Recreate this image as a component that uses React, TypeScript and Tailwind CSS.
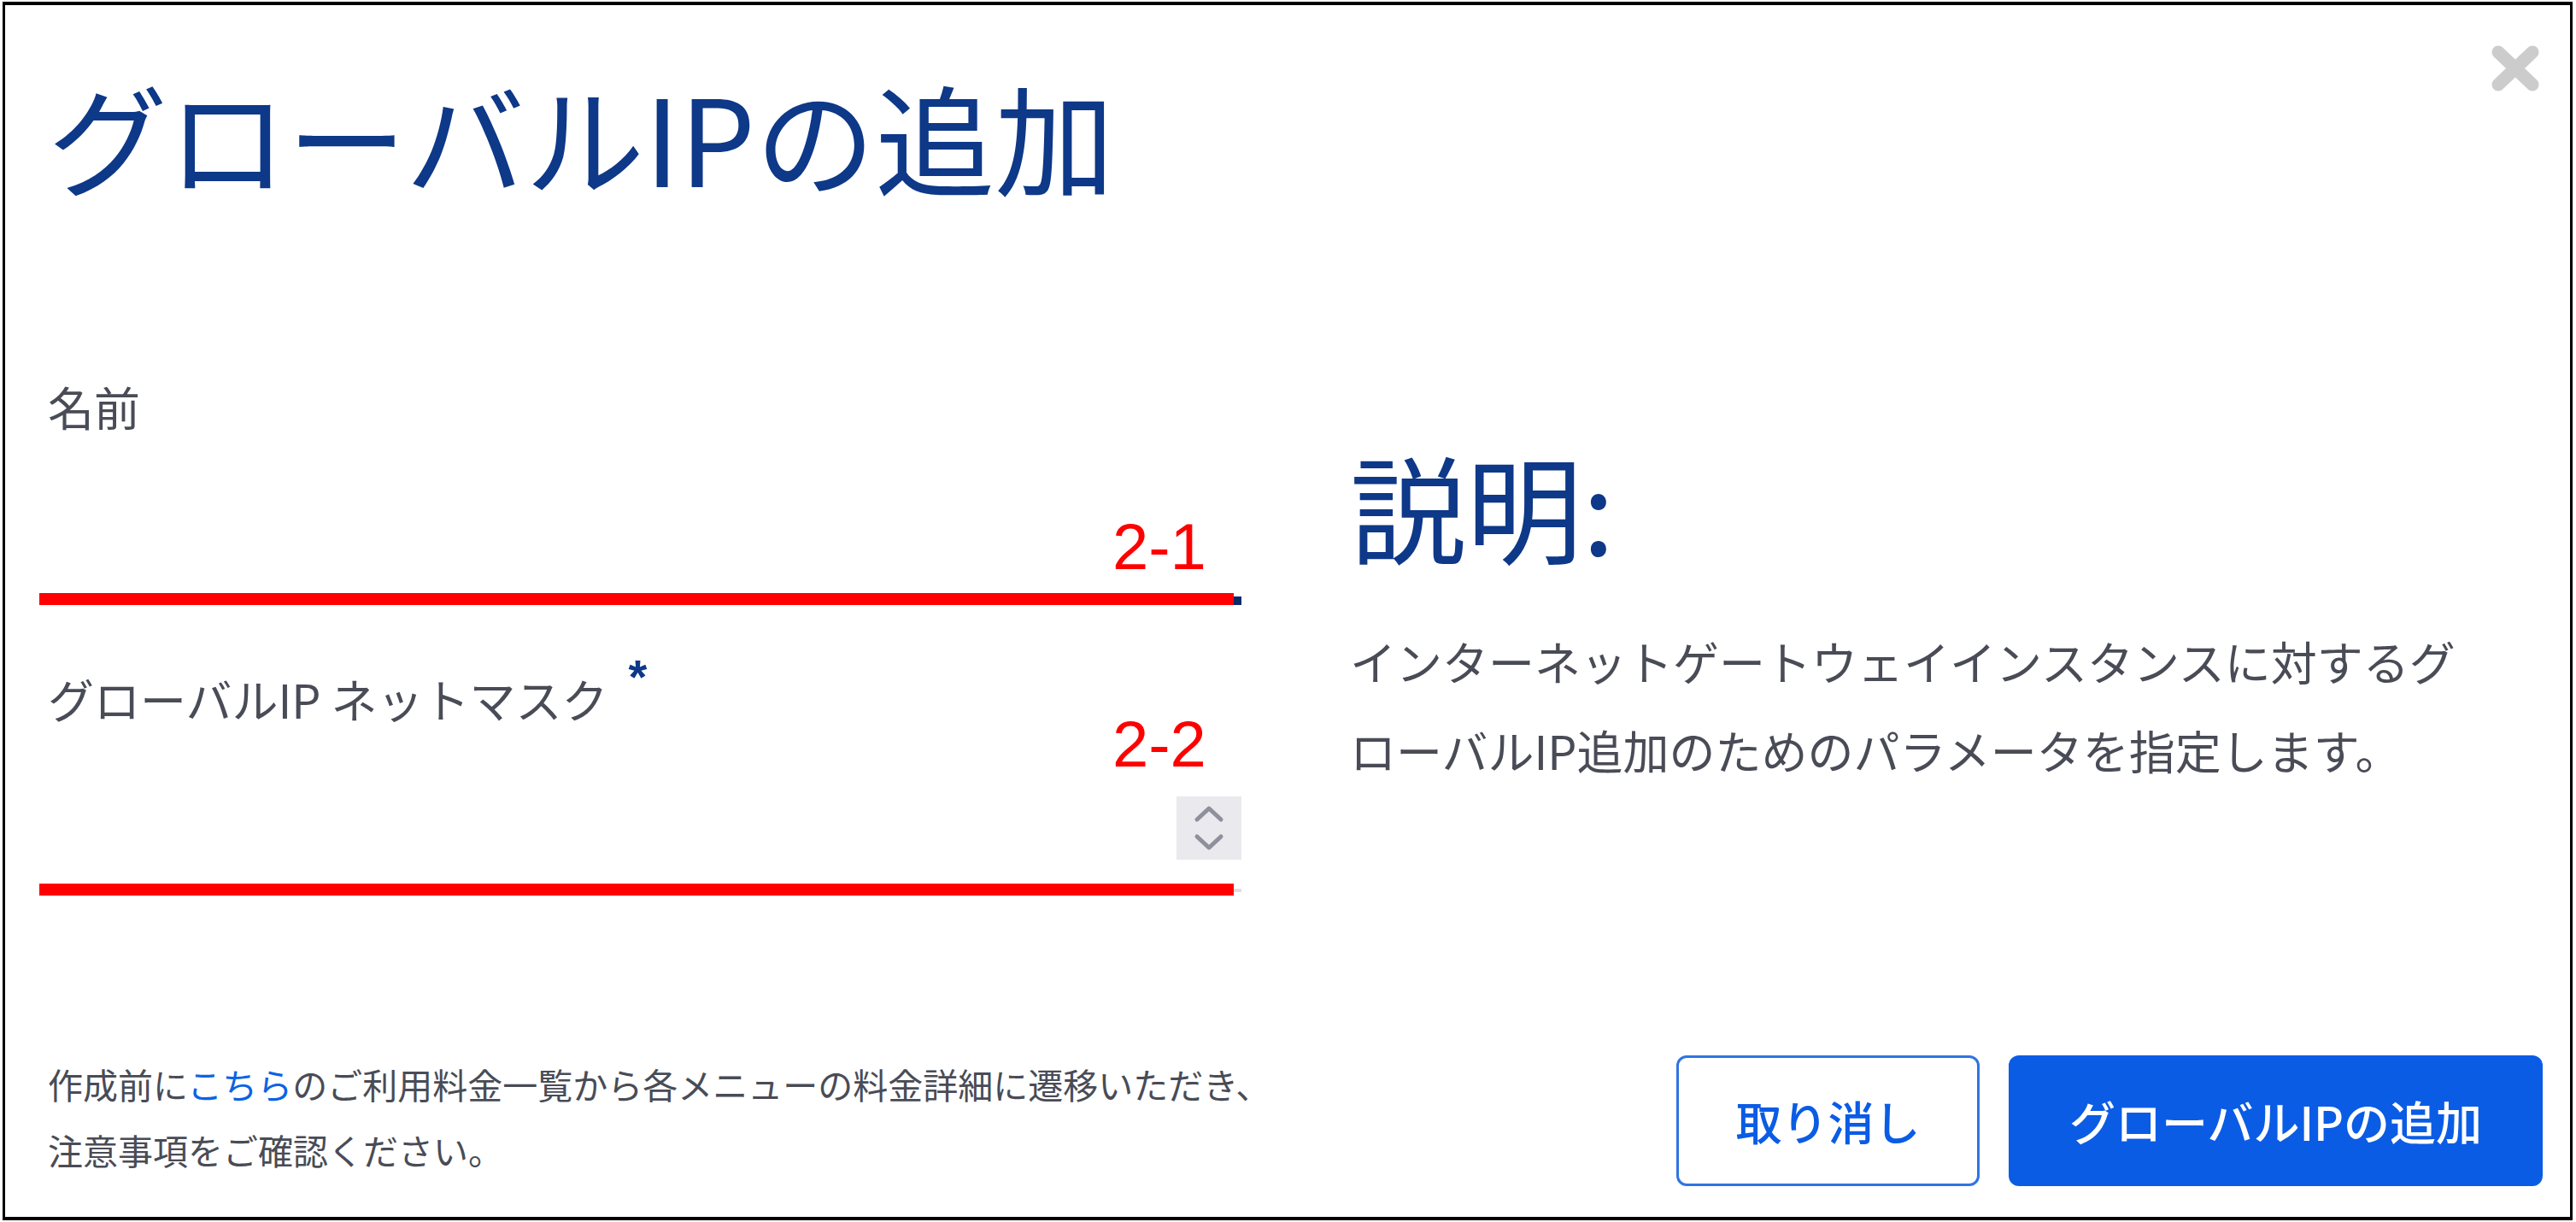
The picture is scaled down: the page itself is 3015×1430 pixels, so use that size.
import React from "react";

function CloseIcon() {
  return (
    <svg width="56" height="54" viewBox="0 0 56 54" fill="none">
      <path d="M8 8 L48 46 M48 8 L8 46" stroke="#cccccc" strokeWidth="15" strokeLinecap="round" />
    </svg>
  );
}

function Spinner() {
  return (
    <div className="w-[76px] h-[74px] bg-[#e9e9ee] flex items-center justify-center">
      <svg width="76" height="74" viewBox="0 0 76 74" fill="none">
        <path d="M24 27 L38 14 L52 27" stroke="#8e909b" strokeWidth="5" strokeLinecap="round" strokeLinejoin="round" />
        <path d="M24 47 L38 60 L52 47" stroke="#8e909b" strokeWidth="5" strokeLinecap="round" strokeLinejoin="round" />
      </svg>
    </div>
  );
}

export default function App() {
  return (
    <div className="relative w-[3015px] h-[1430px] bg-white pt-[2px] pl-[3px] pr-[4px] pb-[2px] font-['Noto_Sans_CJK_JP','Noto_Sans',sans-serif]">
      <div className="relative flex h-full flex-col border-[3px] border-t-4 border-b-4 border-black pl-[50px] pr-[32px]">
        <div className="absolute right-[36px] top-[47px]">
          <CloseIcon />
        </div>

        <h1 className="pt-[82px] text-[140px] leading-none font-normal text-[#0e3888] whitespace-nowrap">
          グローバルIPの追加
        </h1>

        <div className="flex">
          {/* left column */}
          <div className="w-[1397px] pt-[221px]">
            <div className="text-[54px] leading-none h-[54px] text-[#494c56]">名前</div>
            <div className="h-[205px] border-b-[10px] border-[#0a2a6c]" />

            <div className="mt-[83px] flex items-start h-[54px] text-[54px] leading-none text-[#494c56] whitespace-nowrap">
              <span>グローバルIP ネットマスク</span>
              <span className="ml-[24px] -mt-[27px] text-[56px] leading-none font-bold text-[#0e3888] font-['Liberation_Sans',Arial,sans-serif]">
                *
              </span>
            </div>
            <div className="h-[199px] border-b-4 border-[#dedede] flex items-end justify-end pb-[34px]">
              <Spinner />
            </div>
          </div>

          {/* right column */}
          <div className="ml-[127px] pt-[295px]">
            <h2 className="text-[136px] leading-none font-normal text-[#0e3888] whitespace-nowrap">説明:</h2>
            <p className="mt-[63px] text-[54px] leading-[104px] text-[#494c56] whitespace-nowrap">
              インターネットゲートウェイインスタンスに対するグ
              <br />
              ローバルIP追加のためのパラメータを指定します。
            </p>
          </div>
        </div>

        {/* footer */}
        <div className="mt-auto flex items-end justify-between pb-[36px]">
          <p className="mb-[4px] text-[41px] leading-[77px] text-[#494c56] whitespace-nowrap">
            作成前に<span className="text-[#0b63e5]">こちら</span>のご利用料金一覧から各メニューの料金詳細に遷移いただき、
            <br />
            注意事項をご確認ください。
          </p>
          <div className="flex gap-[34px]">
            <button className="w-[355px] h-[153px] rounded-[12px] border-[3px] border-[#2f74e3] bg-white text-[54px] font-medium text-[#0b5ce5] flex items-center justify-center">
              取り消し
            </button>
            <button className="w-[625px] h-[153px] rounded-[12px] bg-[#0b5ce5] text-[54px] font-medium text-white flex items-center justify-center whitespace-nowrap">
              グローバルIPの追加
            </button>
          </div>
        </div>
      </div>

      {/* red annotations */}
      <div className="absolute left-[46px] top-[694px] w-[1398px] h-[14px] bg-[#ff0000]" />
      <div className="absolute left-[46px] top-[1034px] w-[1398px] h-[14px] bg-[#ff0000]" />
      <div className="absolute left-[1302px] top-[602px] text-[76px] leading-none text-[#ff0000] font-['Liberation_Sans',Arial,sans-serif]">
        2-1
      </div>
      <div className="absolute left-[1302px] top-[833px] text-[76px] leading-none text-[#ff0000] font-['Liberation_Sans',Arial,sans-serif]">
        2-2
      </div>
    </div>
  );
}
